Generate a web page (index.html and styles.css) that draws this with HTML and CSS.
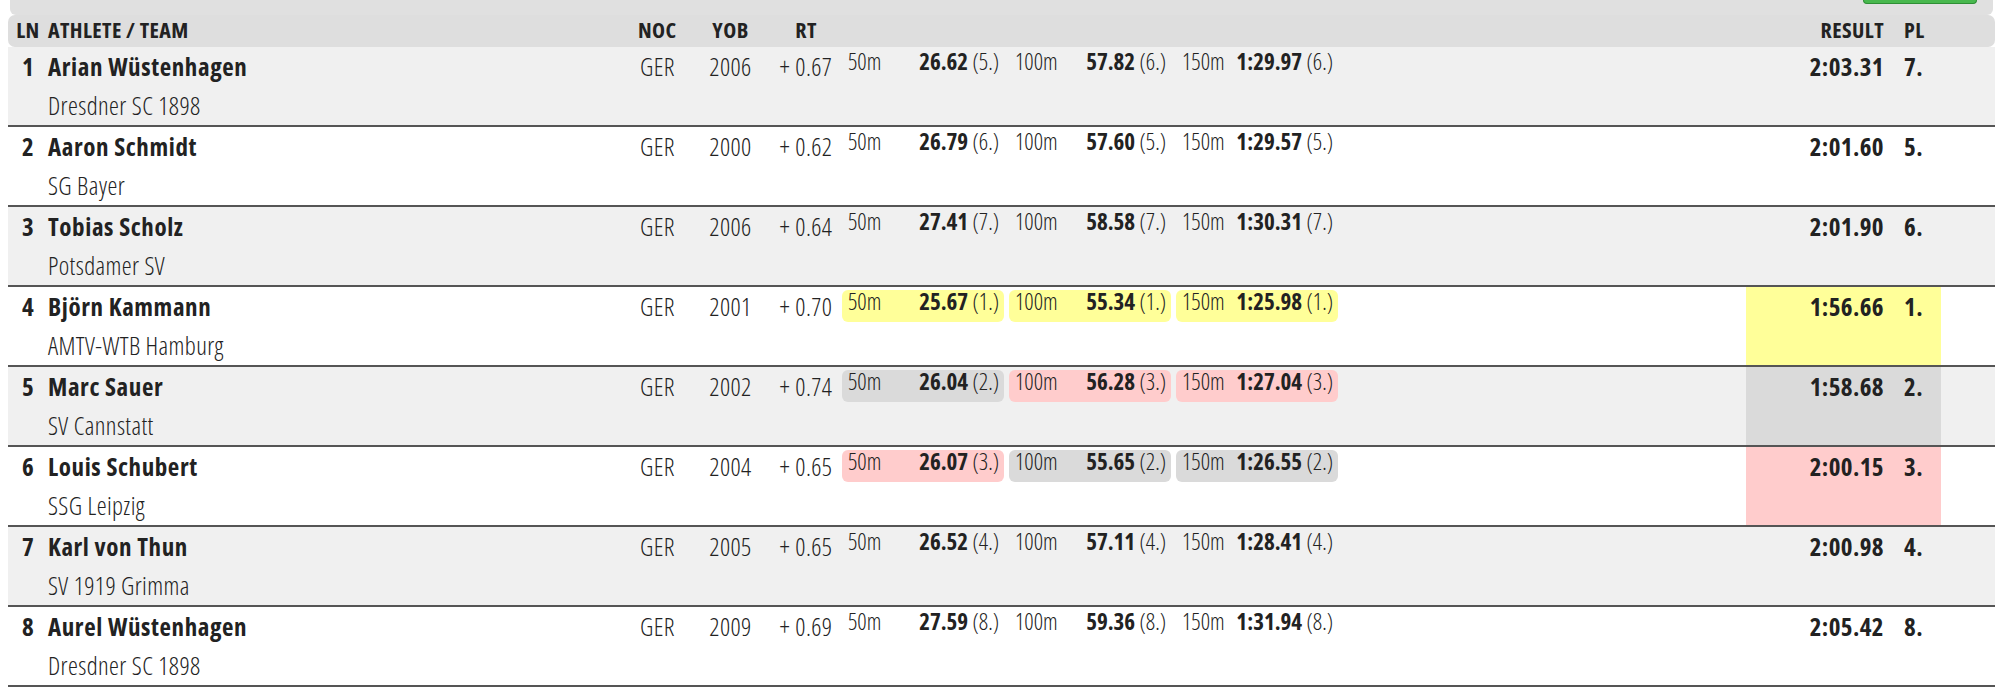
FILE: index.html
```html
<!DOCTYPE html>
<html lang="de">
<head>
<meta charset="utf-8">
<title>Results</title>
<link rel="stylesheet" href="styles.css">
</head>
<body>
<div class="page">
  <div class="topbar"><span class="btn"></span></div>
  <div class="row head">
    <span class="ln">LN</span>
    <span class="ath">ATHLETE / TEAM</span>
    <span class="noc">NOC</span>
    <span class="yob">YOB</span>
    <span class="rt">RT</span>
    <span class="splits"></span>
    <span class="gap"></span>
    <span class="res">RESULT</span>
    <span class="pl">PL</span>
  </div>

  <div class="row odd">
    <span class="ln">1</span>
    <div class="ath"><div class="name">Arian Wüstenhagen</div><div class="club">Dresdner SC 1898</div></div>
    <span class="noc">GER</span><span class="yob">2006</span><span class="rt">+ 0.67</span>
    <div class="splits">
      <div class="split"><span class="d">50m</span><span class="t"><b>26.62</b> (5.)</span></div>
      <div class="split"><span class="d">100m</span><span class="t"><b>57.82</b> (6.)</span></div>
      <div class="split"><span class="d">150m</span><span class="t"><b>1:29.97</b> (6.)</span></div>
    </div>
    <span class="gap"></span><span class="res">2:03.31</span><span class="pl">7.</span>
  </div>

  <div class="row">
    <span class="ln">2</span>
    <div class="ath"><div class="name">Aaron Schmidt</div><div class="club">SG Bayer</div></div>
    <span class="noc">GER</span><span class="yob">2000</span><span class="rt">+ 0.62</span>
    <div class="splits">
      <div class="split"><span class="d">50m</span><span class="t"><b>26.79</b> (6.)</span></div>
      <div class="split"><span class="d">100m</span><span class="t"><b>57.60</b> (5.)</span></div>
      <div class="split"><span class="d">150m</span><span class="t"><b>1:29.57</b> (5.)</span></div>
    </div>
    <span class="gap"></span><span class="res">2:01.60</span><span class="pl">5.</span>
  </div>

  <div class="row odd">
    <span class="ln">3</span>
    <div class="ath"><div class="name">Tobias Scholz</div><div class="club">Potsdamer SV</div></div>
    <span class="noc">GER</span><span class="yob">2006</span><span class="rt">+ 0.64</span>
    <div class="splits">
      <div class="split"><span class="d">50m</span><span class="t"><b>27.41</b> (7.)</span></div>
      <div class="split"><span class="d">100m</span><span class="t"><b>58.58</b> (7.)</span></div>
      <div class="split"><span class="d">150m</span><span class="t"><b>1:30.31</b> (7.)</span></div>
    </div>
    <span class="gap"></span><span class="res">2:01.90</span><span class="pl">6.</span>
  </div>

  <div class="row">
    <span class="ln">4</span>
    <div class="ath"><div class="name">Björn Kammann</div><div class="club">AMTV-WTB Hamburg</div></div>
    <span class="noc">GER</span><span class="yob">2001</span><span class="rt">+ 0.70</span>
    <div class="splits">
      <div class="split gold"><span class="d">50m</span><span class="t"><b>25.67</b> (1.)</span></div>
      <div class="split gold"><span class="d">100m</span><span class="t"><b>55.34</b> (1.)</span></div>
      <div class="split gold"><span class="d">150m</span><span class="t"><b>1:25.98</b> (1.)</span></div>
    </div>
    <span class="gap"></span><span class="res gold">1:56.66</span><span class="pl gold">1.</span>
  </div>

  <div class="row odd">
    <span class="ln">5</span>
    <div class="ath"><div class="name">Marc Sauer</div><div class="club">SV Cannstatt</div></div>
    <span class="noc">GER</span><span class="yob">2002</span><span class="rt">+ 0.74</span>
    <div class="splits">
      <div class="split silver"><span class="d">50m</span><span class="t"><b>26.04</b> (2.)</span></div>
      <div class="split bronze"><span class="d">100m</span><span class="t"><b>56.28</b> (3.)</span></div>
      <div class="split bronze"><span class="d">150m</span><span class="t"><b>1:27.04</b> (3.)</span></div>
    </div>
    <span class="gap"></span><span class="res silver">1:58.68</span><span class="pl silver">2.</span>
  </div>

  <div class="row">
    <span class="ln">6</span>
    <div class="ath"><div class="name">Louis Schubert</div><div class="club">SSG Leipzig</div></div>
    <span class="noc">GER</span><span class="yob">2004</span><span class="rt">+ 0.65</span>
    <div class="splits">
      <div class="split bronze"><span class="d">50m</span><span class="t"><b>26.07</b> (3.)</span></div>
      <div class="split silver"><span class="d">100m</span><span class="t"><b>55.65</b> (2.)</span></div>
      <div class="split silver"><span class="d">150m</span><span class="t"><b>1:26.55</b> (2.)</span></div>
    </div>
    <span class="gap"></span><span class="res bronze">2:00.15</span><span class="pl bronze">3.</span>
  </div>

  <div class="row odd">
    <span class="ln">7</span>
    <div class="ath"><div class="name">Karl von Thun</div><div class="club">SV 1919 Grimma</div></div>
    <span class="noc">GER</span><span class="yob">2005</span><span class="rt">+ 0.65</span>
    <div class="splits">
      <div class="split"><span class="d">50m</span><span class="t"><b>26.52</b> (4.)</span></div>
      <div class="split"><span class="d">100m</span><span class="t"><b>57.11</b> (4.)</span></div>
      <div class="split"><span class="d">150m</span><span class="t"><b>1:28.41</b> (4.)</span></div>
    </div>
    <span class="gap"></span><span class="res">2:00.98</span><span class="pl">4.</span>
  </div>

  <div class="row">
    <span class="ln">8</span>
    <div class="ath"><div class="name">Aurel Wüstenhagen</div><div class="club">Dresdner SC 1898</div></div>
    <span class="noc">GER</span><span class="yob">2009</span><span class="rt">+ 0.69</span>
    <div class="splits">
      <div class="split"><span class="d">50m</span><span class="t"><b>27.59</b> (8.)</span></div>
      <div class="split"><span class="d">100m</span><span class="t"><b>59.36</b> (8.)</span></div>
      <div class="split"><span class="d">150m</span><span class="t"><b>1:31.94</b> (8.)</span></div>
    </div>
    <span class="gap"></span><span class="res">2:05.42</span><span class="pl">8.</span>
  </div>
</div>
</body>
</html>
```

FILE: styles.css
```css
html, body {
  background: #ffffff;
}
body {
  margin: 0 5px 0 8px;
  font-family: "Open Sans", "Liberation Sans", sans-serif;
  font-stretch: 75%;
  font-weight: 300;
  font-size: 25px;
  letter-spacing: 0.4px;
  color: #222222;
}
.page {
  width: 1987px;
}
.topbar {
  height: 15px;
  margin: 0 2px;
  background: #e0e0e0;
  border-radius: 0 0 6px 6px;
  display: flex;
  justify-content: flex-end;
  padding-right: 16px;
}
.btn {
  display: block;
  width: 112px;
  height: 3px;
  background: #48b84e;
  border: 1px solid #2e8f35;
  border-top: none;
  border-radius: 0 0 5px 5px;
}
.row {
  display: grid;
  grid-template-columns: 40px 590px 62px 61px 75px 502px 1fr 149px 46px 54px;
  line-height: 39px;
  border-bottom: 2px solid #555555;
}
.row.odd {
  background: #f0f0f0;
}
.row.head {
  background: #dedede;
  border-bottom: none;
  border-radius: 7px;
  height: 32px;
  line-height: 28px;
  font-size: 22px;
  font-weight: 700;
  text-transform: uppercase;
}
.ln {
  text-align: center;
  font-weight: 700;
}
.name {
  font-weight: 700;
  letter-spacing: 0.6px;
  height: 39px;
}
.club {
  font-weight: 300;
  height: 39px;
}
.noc {
  padding-left: 2px;
}
.head .noc {
  padding-left: 0;
}
.yob {
  text-align: center;
}
.rt {
  text-align: center;
  padding-left: 15px;
}
.splits {
  display: flex;
  gap: 5px;
  padding: 3px 0 0 6px;
  align-items: flex-start;
  font-size: 23px;
  letter-spacing: 0;
}
.split {
  display: flex;
  width: 162px;
  box-sizing: border-box;
  height: 32px;
  padding: 0 5px 0 6px;
  line-height: 22px;
  border-radius: 6px;
}
.split .t {
  margin-left: auto;
}
.split b {
  font-weight: 700;
}
.res {
  text-align: right;
  padding-right: 11px;
  font-weight: 700;
}
.pl {
  padding-left: 9px;
  font-weight: 700;
}
.gold {
  background: #ffff99;
}
.silver {
  background: #dadada;
}
.bronze {
  background: #ffcccc;
}
```
